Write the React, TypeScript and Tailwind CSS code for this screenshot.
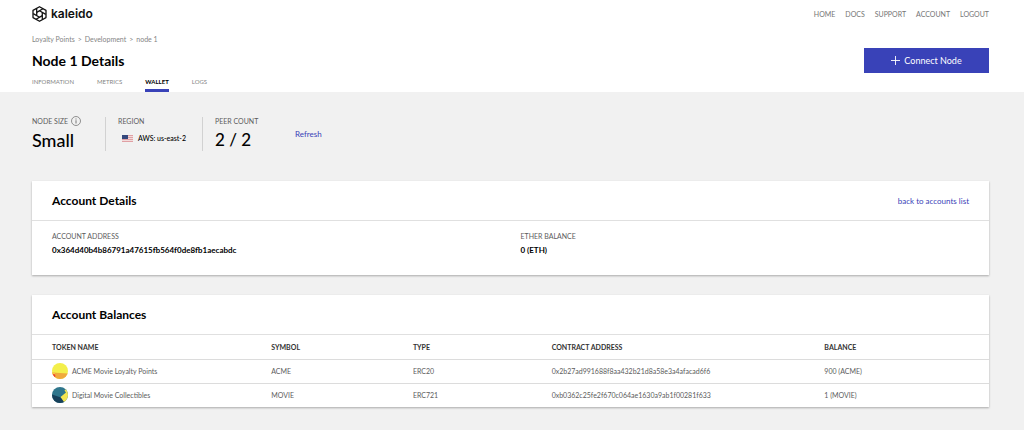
import type { ReactNode } from 'react';
import clsx from 'clsx';

interface Token {
  name: string;
  symbol: string;
  type: string;
  address: string;
  balance: string;
  icon: ReactNode;
}

const navLinks = ['Home', 'Docs', 'Support', 'Account', 'Logout'];
const crumbs = ['Loyalty Points', 'Development', 'node 1'];
const tabs = ['Information', 'Metrics', 'Wallet', 'Logs'];

const tokens: Token[] = [
  {
    name: 'ACME Movie Loyalty Points',
    symbol: 'ACME',
    type: 'ERC20',
    address: '0x2b27ad991688f8aa432b21d8a58e3a4afacad6f6',
    balance: '900 (ACME)',
    icon: <AcmeIcon />,
  },
  {
    name: 'Digital Movie Collectibles',
    symbol: 'MOVIE',
    type: 'ERC721',
    address: '0xb0362c25fe2f670c064ae1630a9ab1f00281f633',
    balance: '1 (MOVIE)',
    icon: <MovieIcon />,
  },
];

function Logo() {
  return (
    <svg viewBox="0 0 30 32" className="h-4 w-[15px]" fill="none" stroke="#111" strokeWidth="2.6" strokeLinejoin="round" aria-hidden="true">
      <path d="M15 1.5 28 8.8v14.4L15 30.5 2 23.2V8.8z" />
      {/* Blades of the kaleidoscope, one per side of the hexagon */}
      {[0, 60, 120, 180, 240, 300].map((angle) => (
        <path key={angle} d="M9.4 12.8 21.9 5.5" transform={`rotate(${angle} 15 16)`} />
      ))}
    </svg>
  );
}

function AcmeIcon() {
  return (
    <svg viewBox="0 0 16 16" className="size-4 shrink-0 rounded-full" aria-hidden="true">
      <rect width="16" height="16" fill="#f3ef4b" />
      <path d="M0 9.5 16 10.5V16H0z" fill="#f0a93c" />
      <path d="M0 9 3 9.5v1.5L0 11z" fill="#f6c944" />
      <path d="M0 11 3 11.5l.5 2-3 1z" fill="#ee3b2f" />
    </svg>
  );
}

function MovieIcon() {
  return (
    <svg viewBox="0 0 16 16" className="size-4 shrink-0 rounded-full" aria-hidden="true">
      <rect width="16" height="16" fill="#2f768c" />
      <path d="M0 7.5 9 10.5l3 2V16H0z" fill="#17405a" />
      <path d="M8.5 10 14 5.500 12.500 3.500 14 2l2 2v9l-4 2z" fill="#f5e550" />
    </svg>
  );
}

function UsFlag() {
  return (
    <svg viewBox="0 0 22 14" className="h-[7px] w-[11px]" aria-hidden="true">
      <rect width="22" height="14" fill="#f3dcdc" />
      <path d="M0 1h22M0 5h22M0 9h22M0 13h22" stroke="#e0a0a4" strokeWidth="2" />
      <rect width="12" height="8" fill="#35487c" />
    </svg>
  );
}

function InfoIcon() {
  return (
    <svg viewBox="0 0 20 20" className="size-[10px] shrink-0" fill="none" stroke="#777" strokeWidth="1.6" aria-hidden="true">
      <circle cx="10" cy="10" r="9" />
      <path d="M10 8.5V15M10 5v2" strokeWidth="2" />
    </svg>
  );
}

function Card({ title, action, children }: { title: string; action?: ReactNode; children: ReactNode }) {
  return (
    <section className="bg-white shadow-[0_1px_2px_rgba(0,0,0,0.3)]">
      <div className="flex h-10 items-center justify-between border-b border-[#e0e0e0] px-5">
        <h2 className="text-[12px] font-bold text-black">{title}</h2>
        {action}
      </div>
      {children}
    </section>
  );
}

export default function App() {
  return (
    <div className="min-h-screen bg-[#f1f1f1] font-['Lato',sans-serif] text-[7px] leading-3 text-[#5c5c5c]">
      <header className="bg-white pr-[35px] pl-8">
        <div className="flex h-7 items-center justify-between">
          <a href="#" className="flex items-center gap-1 text-[#111]">
            <Logo />
            <span className="font-['Inter',sans-serif] text-[12px] font-semibold">kaleido</span>
          </a>
          <nav className="flex gap-[10px] text-[#757575] uppercase">
            {navLinks.map((link) => (
              <a key={link} href="#">{link}</a>
            ))}
          </nav>
        </div>

        <div className="flex items-end justify-between pt-1">
          <div>
            <nav aria-label="Breadcrumb" className="flex gap-[3px] pt-px text-[#858585]">
              {crumbs.map((crumb, index) => (
                <span key={crumb} className="flex gap-[3px]">
                  {index > 0 && <span>&gt;</span>}
                  <a href="#">{crumb}</a>
                </span>
              ))}
            </nav>
            <h1 className="mt-1 text-[14px] leading-6 font-bold text-black">Node 1 Details</h1>
          </div>
          <button type="button" className="flex h-[25px] w-[125px] items-center justify-center gap-1 bg-[#3942b8] text-[9px] text-white">
            <svg viewBox="0 0 10 10" className="size-[9px]" stroke="currentColor" aria-hidden="true">
              <path d="M5 0v10M0 5h10" />
            </svg>
            Connect Node
          </button>
        </div>

        <nav className="flex gap-[23px] text-[6px] text-[#858585] uppercase">
          {tabs.map((tab) => (
            <a
              key={tab}
              href="#"
              className={clsx('h-[19px] pt-[3px]', tab === 'Wallet' && 'border-b-3 border-[#3942b8] font-bold text-black')}
            >
              {tab}
            </a>
          ))}
        </nav>
      </header>

      <main className="pt-[25px] pr-[35px] pb-6 pl-8">
        <div className="flex h-[34px] leading-2">
          <div className="w-[73px]">
            <div className="flex h-2 items-center gap-[3px]">NODE SIZE <InfoIcon /></div>
            <div className="mt-[5px] text-[18px] leading-5 font-medium text-black">Small</div>
          </div>
          <div className="w-[97px] border-l border-[#d2d2d2] pl-3">
            <div>REGION</div>
            <div className="mt-[7px] flex h-3 items-center gap-[5px] pl-1 font-medium text-black">
              <UsFlag />
              AWS: us-east-2
            </div>
          </div>
          <div className="w-[93px] border-l border-[#d2d2d2] pl-3">
            <div>PEER COUNT</div>
            <div className="mt-[5px] text-[17px] leading-5 font-medium text-black">2 / 2</div>
          </div>
          <button type="button" className="self-center text-[8px] text-[#3942b8]">Refresh</button>
        </div>

        <div className="mt-[30px] space-y-5">
          <Card
            title="Account Details"
            action={<a href="#" className="text-[8px] text-[#3942b8]">back to accounts list</a>}
          >
            <dl className="grid grid-cols-[469fr_449fr] px-5 pt-[9px] pb-[19px]">
              <div>
                <dt>ACCOUNT ADDRESS</dt>
                <dd className="mt-0.5 text-[8px] font-bold text-black">0x364d40b4b86791a47615fb564f0de8fb1aecabdc</dd>
              </div>
              <div>
                <dt>ETHER BALANCE</dt>
                <dd className="mt-0.5 text-[8px] font-bold text-black">0 (ETH)</dd>
              </div>
            </dl>
          </Card>

          <Card title="Account Balances">
            <table className="w-full table-fixed text-left">
              <thead>
                <tr className="h-6 text-[#333]">
                  <th className="w-[25%] pl-5">TOKEN NAME</th>
                  <th className="w-[14.8%]">SYMBOL</th>
                  <th className="w-[14.5%]">TYPE</th>
                  <th className="w-[28.5%]">CONTRACT ADDRESS</th>
                  <th>BALANCE</th>
                </tr>
              </thead>
              <tbody>
                {tokens.map((token) => (
                  <tr key={token.symbol} className="h-6 border-t border-[#dcdcdc]">
                    <td className="pl-5">
                      <div className="flex items-center gap-1">
                        {token.icon}
                        {token.name}
                      </div>
                    </td>
                    <td>{token.symbol}</td>
                    <td>{token.type}</td>
                    <td>{token.address}</td>
                    <td>{token.balance}</td>
                  </tr>
                ))}
              </tbody>
            </table>
          </Card>
        </div>
      </main>
    </div>
  );
}
